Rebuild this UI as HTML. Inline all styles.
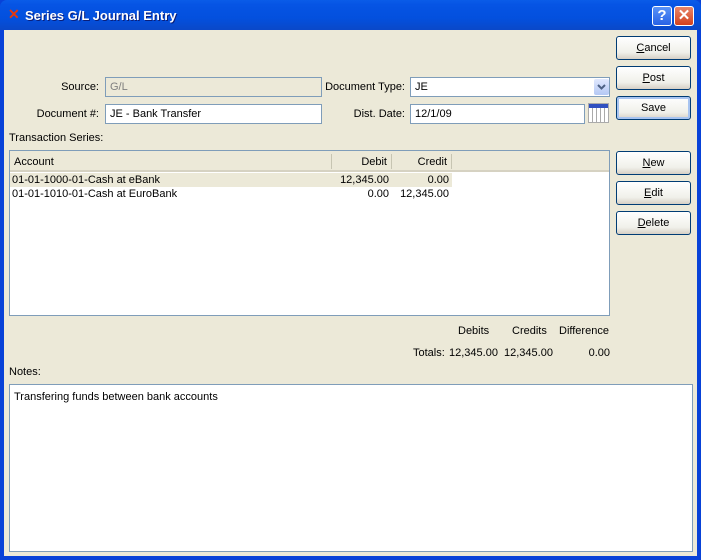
<!DOCTYPE html>
<html><head><style>
*{margin:0;padding:0;box-sizing:border-box}
body{width:701px;height:560px;overflow:hidden;font-family:"Liberation Sans",sans-serif;font-size:11px;color:#000;background:#0842d8;position:relative}
.a{position:absolute}
#title{left:0;top:0;width:701px;height:30px;background:linear-gradient(#0a5ce8,#0654e4 15%,#0350de 60%,#0a48c8);border-radius:7px 7px 0 0}
#body{left:4px;top:30px;width:693px;height:526px;background:#ECE9D8}
.lbl{position:absolute;text-align:right;white-space:nowrap}
.fld{position:absolute;border:1px solid #7f9db9;background:#fff;padding:3px 0 0 4px;height:20px;white-space:nowrap}
.btn{position:absolute;left:616px;width:75px;height:24px;border:1px solid #003c74;border-radius:3px;background:linear-gradient(#fff,#f0f0ea 70%,#d6d0c5);text-align:center;line-height:22px}
.u{text-decoration:underline}
</style></head><body>
<div id="title" class="a"></div>
<div class="a" style="left:8px;top:7px;color:#e8380c;font-weight:bold;font-size:14px;line-height:14px">✕</div>
<div class="a" style="left:25px;top:8px;color:#fff;font-weight:bold;font-size:13px;text-shadow:1px 1px #0a1e78">Series G/L Journal Entry</div>
<div class="a" style="left:652px;top:6px;width:20px;height:20px;border:1px solid #fff;border-radius:3px;background:linear-gradient(#5a93f8,#2862e6);color:#fff;font-weight:bold;font-size:15px;text-align:center;line-height:18px">?</div>
<div class="a" style="left:674px;top:6px;width:20px;height:20px;border:1px solid #fff;border-radius:3px;background:linear-gradient(#e8866a,#d2401c);color:#fff;font-weight:bold;font-size:15px;text-align:center;line-height:18px">✕</div>
<div id="body" class="a"></div>

<div class="lbl" style="right:602px;top:81px">Source:</div>
<div class="fld" style="left:105px;top:77px;width:217px;background:#ECE9D8;color:#808080">G/L</div>
<div class="lbl" style="right:602px;top:108px">Document #:</div>
<div class="fld" style="left:105px;top:104px;width:217px">JE - Bank Transfer</div>
<div class="lbl" style="right:296px;top:81px">Document Type:</div>
<div class="fld" style="left:410px;top:77px;width:200px">JE</div>
<div class="a" style="left:594px;top:79px;width:15px;height:16px;background:linear-gradient(#e0e8fe,#b4c8f4);border-radius:2px"><svg width="15" height="16"><path d="M4 6l3.5 3.5L11 6" stroke="#4d6185" stroke-width="2" fill="none"/></svg></div>
<div class="lbl" style="right:296px;top:108px">Dist. Date:</div>
<div class="fld" style="left:410px;top:104px;width:175px">12/1/09</div>
<div class="a" style="left:588px;top:103px;width:21px;height:20px;border:1px solid #aaa;background:repeating-linear-gradient(90deg,#fff 0 3px,#aaa 3px 4px),#fff"><div style="height:4px;background:#3050c0"></div></div>

<div class="btn" style="top:36px"><span class="u">C</span>ancel</div>
<div class="btn" style="top:66px"><span class="u">P</span>ost</div>
<div class="btn" style="top:96px;box-shadow:inset 0 0 0 2px #a8c4f0">Save</div>
<div class="btn" style="top:151px"><span class="u">N</span>ew</div>
<div class="btn" style="top:181px"><span class="u">E</span>dit</div>
<div class="btn" style="top:211px"><span class="u">D</span>elete</div>

<div class="a" style="left:9px;top:132px">Transaction Series:</div>
<div class="a" style="left:9px;top:150px;width:601px;height:166px;border:1px solid #7f9db9;background:#fff">
 <div class="a" style="left:0;top:0;width:599px;height:21px;background:#ECE9D8;border-bottom:2px solid #d6d2c2"></div>
 <div class="a" style="left:4px;top:5px">Account</div>
 <div class="a" style="left:321px;top:3px;width:1px;height:15px;background:#c7c5b2"></div>
 <div class="a" style="left:322px;top:5px;width:55px;text-align:right">Debit</div>
 <div class="a" style="left:381px;top:3px;width:1px;height:15px;background:#c7c5b2"></div>
 <div class="a" style="left:382px;top:5px;width:55px;text-align:right">Credit</div>
 <div class="a" style="left:441px;top:3px;width:1px;height:15px;background:#c7c5b2"></div>
 <div class="a" style="left:0;top:22px;width:442px;height:14px;background:#ECE9D8"></div>
 <div class="a" style="left:2px;top:23px">01-01-1000-01-Cash at eBank</div>
 <div class="a" style="left:300px;top:23px;width:79px;text-align:right">12,345.00</div>
 <div class="a" style="left:360px;top:23px;width:79px;text-align:right">0.00</div>
 <div class="a" style="left:2px;top:37px">01-01-1010-01-Cash at EuroBank</div>
 <div class="a" style="left:300px;top:37px;width:79px;text-align:right">0.00</div>
 <div class="a" style="left:360px;top:37px;width:79px;text-align:right">12,345.00</div>
</div>

<div class="a" style="left:458px;top:325px">Debits</div>
<div class="a" style="left:512px;top:325px">Credits</div>
<div class="a" style="left:559px;top:325px">Difference</div>
<div class="a" style="left:413px;top:347px">Totals:</div>
<div class="a" style="left:449px;top:347px">12,345.00</div>
<div class="a" style="left:504px;top:347px">12,345.00</div>
<div class="a" style="left:580px;top:347px;width:30px;text-align:right">0.00</div>

<div class="a" style="left:9px;top:366px">Notes:</div>
<div class="a" style="left:9px;top:384px;width:684px;height:168px;border:1px solid #7f9db9;background:#fff;padding:6px 4px">Transfering funds between bank accounts</div>
</body></html>
